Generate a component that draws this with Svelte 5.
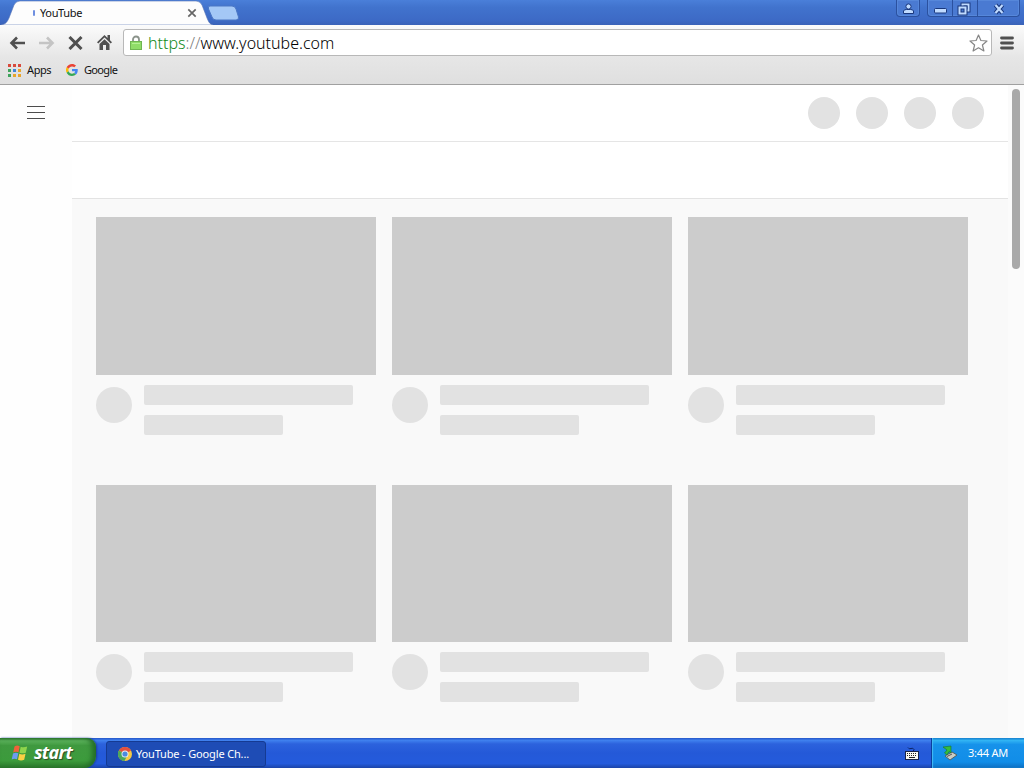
<script>
  const avatars = [1, 2, 3, 4]
  const videos = [1, 2, 3, 4, 5, 6]
  const appColors = [
    '#d84a3c', '#d84a3c', '#d84a3c',
    '#3fa35c', '#4285d8', '#e8a52c',
    '#3fa35c', '#e8a52c', '#e8a52c',
  ]
</script>

<div class="desktop">
  <header class="titlebar">
    <div class="tab">
      <svg class="shape" width="212" height="25" viewBox="0 0 212 25">
        <path d="M0 25 C5 24 6 22 8 18 L13 5 Q15 1 19 1 H195 Q199 1 201 5 L206 18 C208 23 209 24 212 25Z" fill="#fdfdfd" stroke="#5573b5" stroke-width=".6" />
      </svg>
      <i class="spinner"></i>
      <span class="tab-title">YouTube</span>
      <svg class="tab-close" width="10" height="10" viewBox="0 0 10 10">
        <path d="M1.3 1.3 8.7 8.7M8.7 1.3 1.3 8.7" stroke="#666" stroke-width="1.7" />
      </svg>
    </div>
    <svg class="new-tab" width="33" height="16" viewBox="0 0 33 16">
      <path d="M3 1H25Q28 1 29 4L31.500 12Q32 15 29 15H9Q6 15 5 12L1.500 4Q.5 1 3 1Z" fill="#a4c8f6" stroke="#4a76c4" />
    </svg>
    <div class="controls">
      <button class="user" aria-label="Profile">
        <svg width="13" height="13" viewBox="0 0 13 13" fill="#c0dbff" stroke="#19377c">
          <path d="M1.500 11.500V9Q2 7.500 4.500 7.500h4Q11 7.500 11.500 9V11.500z" />
          <circle cx="6.500" cy="4.500" r="2.600" />
        </svg>
      </button>
      <div class="group">
        <button class="min" aria-label="Minimize">
          <svg width="13" height="6" viewBox="0 0 13 6"><rect x=".5" y=".5" width="12" height="4.500" rx="1" fill="#c0dbff" stroke="#19377c" /></svg>
        </button>
        <button class="restore" aria-label="Restore">
          <svg width="14" height="14" viewBox="0 0 14 14" fill="none">
            <path d="M5.500 4V2.500H11.500V8.500H10" stroke="#19377c" stroke-width="4" />
            <path d="M5.500 4V2.500H11.500V8.500H10" stroke="#c0dbff" stroke-width="2" />
            <rect x="2.500" y="5.500" width="6" height="6" stroke="#19377c" stroke-width="4" />
            <rect x="2.500" y="5.500" width="6" height="6" stroke="#c0dbff" stroke-width="2" />
          </svg>
        </button>
        <button class="close" aria-label="Close">
          <svg width="12" height="12" viewBox="0 0 12 12">
            <path d="M2.500 2 9.500 10M9.500 2 2.500 10" stroke="#19377c" stroke-width="4.200" />
            <path d="M2.500 2 9.500 10M9.500 2 2.500 10" stroke="#c0dbff" stroke-width="2.200" />
          </svg>
        </button>
      </div>
    </div>
  </header>

  <div class="chrome">
    <nav class="toolbar">
      <svg width="17" height="14" viewBox="0 0 17 14" fill="none" stroke="#505050" stroke-width="2.600">
        <path d="M16 7H3M8 1.500 2.500 7 8 12.500" />
      </svg>
      <svg width="17" height="14" viewBox="0 0 17 14" fill="none" stroke="#c4c4c4" stroke-width="2.600">
        <path d="M1 7H14M9 1.500 14.500 7 9 12.500" />
      </svg>
      <svg class="stop" width="15" height="14" viewBox="0 0 15 14" stroke="#505050" stroke-width="3">
        <path d="M1.500 1 13.500 13M13.500 1 1.500 13" />
      </svg>
      <svg class="home" width="15" height="15" viewBox="0 0 15 15" fill="#505050">
        <path d="M7.500 0 0 7.300 1.300 8.500 7.500 2.600 13.700 8.500 15 7.300 13 5.300V0H10.500V2.900ZM2.500 9 7.500 4.200 12.500 9V15H9V10H6V15H2.500Z" />
      </svg>
      <div class="address">
        <svg class="lock" width="12" height="16" viewBox="0 0 12 16">
          <path d="M3 7V4.500a3 3 0 0 1 6 0V7" fill="none" stroke="#8b938b" stroke-width="1.800" />
          <rect x=".5" y="6.500" width="11" height="8" fill="#8fdc68" stroke="#6fb552" />
          <path d="M2 8.500h8" stroke="#b5f094" />
        </svg>
        <span class="url"><span class="secure">https</span><span class="slashes">://</span>www.youtube.com</span>
        <svg class="star" width="19" height="18" viewBox="0 0 19 18">
          <path d="M9.500 1 11.900 6.500 18 7 13.400 11 14.900 17 9.500 13.800 4.100 17 5.600 11 1 7 7.100 6.500Z" fill="#fff" stroke="#868686" stroke-width="1.200" stroke-linejoin="round" />
        </svg>
      </div>
      <svg class="menu" width="14" height="14" viewBox="0 0 14 14" stroke="#505050" stroke-width="2.800" stroke-linecap="round">
        <path d="M1.500 2H12.500M1.500 7H12.500M1.500 12H12.500" />
      </svg>
    </nav>
    <div class="bookmarks">
      <div class="apps">
        {#each appColors as color}
          <i style="background: {color}"></i>
        {/each}
      </div>
      <span class="apps-label">Apps</span>
      <svg class="g" width="12" height="12" viewBox="0 0 48 48">
        <path fill="#ea4335" d="M24 9.500c3.500 0 6.700 1.200 9.200 3.600l6.900-6.900C35.900 2.400 30.500 0 24 0 14.600 0 6.500 5.400 2.600 13.200l8 6.200C12.400 13.700 17.700 9.500 24 9.500z" />
        <path fill="#4285f4" d="M47 24.600c0-1.600-.2-3.100-.4-4.600H24v9h12.900c-.6 3-2.300 5.500-4.700 7.200l7.700 6C44.400 38 47 31.800 47 24.600z" />
        <path fill="#fbbc05" d="M10.500 28.600A14.500 14.500 0 0 1 10.500 19.400l-8-6.200a24 24 0 0 0 0 21.600z" />
        <path fill="#34a853" d="M24 48c6.500 0 11.900-2.100 15.900-5.800l-7.700-6c-2.200 1.500-4.900 2.300-8.200 2.300-6.300 0-11.600-4.200-13.500-9.900l-8 6.200C6.500 42.600 14.600 48 24 48z" />
      </svg>
      <span class="google-label">Google</span>
    </div>
  </div>

  <main>
    <aside>
      <button class="guide" aria-label="Guide"><i></i><i></i><i></i></button>
    </aside>
    <div class="page">
      <div class="masthead">
        {#each avatars as avatar (avatar)}
          <i></i>
        {/each}
      </div>
      <div class="chips"></div>
      <div class="grid">
        {#each videos as video (video)}
          <article>
            <div class="thumb"></div>
            <div class="details">
              <i class="channel"></i>
              <div class="lines">
                <i class="line"></i>
                <i class="line short"></i>
              </div>
            </div>
          </article>
        {/each}
      </div>
    </div>
    <div class="scrollbar"><i></i></div>
  </main>

  <footer class="taskbar">
    <button class="start">
      <svg width="18" height="18" viewBox="0 0 18 18">
        <path d="M3.500 2.500Q6 .7 8.700 2.200L7.500 8.200Q5 7 2.200 8.400Z" fill="#f0623a" />
        <path d="M9.700 2.700Q12.500 4 16.200 2.500L14.800 8.700Q11.500 10 8.500 8.700Z" fill="#8fd44c" />
        <path d="M2 9.500Q4.800 8 7.300 9.300L6 15.300Q3.500 14 .7 15.500Z" fill="#6c9cf0" />
        <path d="M8.300 9.800Q11.300 11 14.500 9.800L13.200 15.800Q10 17.200 7 15.800Z" fill="#fbd044" />
      </svg>
      <span>start</span>
    </button>
    <div class="task">
      <svg width="14" height="14" viewBox="0 0 14 14">
        <circle cx="7" cy="7" r="7" fill="#f6c945" />
        <path d="M7 7 .9 3.500A7 7 0 0 1 13.100 3.500Z" fill="#e2503f" />
        <path d="M7 7 .9 3.500A7 7 0 0 0 6.500 14L9 9Z" fill="#4ba85c" />
        <circle cx="7" cy="7" r="3.500" fill="#e9eef5" />
        <circle cx="7" cy="7" r="2.600" fill="#4b8ae0" />
      </svg>
      <span>YouTube - Google Ch...</span>
    </div>
    <svg class="keyboard" width="14" height="13" viewBox="0 0 14 13">
      <path d="M3 .5Q4 2.500 6 1.500T9 2.500L8 5" fill="none" stroke="#0c2466" />
      <rect x=".5" y="4.500" width="13" height="8" fill="#f8f8f0" stroke="#182448" />
      <path d="M2 6.500H12M2 8.500H12" stroke="#222" stroke-dasharray="1 1" />
      <path d="M4 10.500H10" stroke="#222" />
    </svg>
    <div class="tray">
      <svg width="16" height="16" viewBox="0 0 16 16">
        <path d="M3 11 10 7 15 10 8 15Z" fill="#c9ccc4" stroke="#4c534c" stroke-width=".8" />
        <path d="M5 11.500 10 9" stroke="#555" />
        <path d="M1 2 9 1V8L7 6.500 5 10 2.500 8 5 5Z" fill="#35bd3c" stroke="#17742b" stroke-width=".6" />
      </svg>
      <span>3:44 AM</span>
    </div>
  </footer>
</div>

<style>
  :global(body) {
    margin: 0;
    overflow: hidden;
  }
  .desktop {
    width: 1024px;
    height: 768px;
    display: flex;
    flex-direction: column;
    font-family: 'Noto Sans', 'Open Sans', sans-serif;
    font-size: 11px;
    line-height: 14px;
    color: #111;
    background: #fff;
  }
  .desktop * {
    box-sizing: border-box;
  }
  svg {
    display: block;
    flex: none;
  }
  i {
    display: block;
  }
  button {
    margin: 0;
    padding: 0;
    border: 0;
    background: none;
    font: inherit;
  }
  span {
    white-space: nowrap;
  }
  .titlebar {
    height: 25px;
    flex: none;
    display: flex;
    align-items: flex-start;
    background: linear-gradient(#4a7fd9, #4173cd 30%, #3d6ac6 80%, #3a63b8);
  }
  .tab {
    position: relative;
    width: 205px;
    height: 25px;
    display: flex;
    align-items: center;
    padding: 1px 8px 0 33px;
  }
  .shape {
    position: absolute;
    left: 1px;
    top: 0;
  }
  .spinner {
    position: relative;
    width: 2px;
    height: 6px;
    border-radius: 1px;
    background: #6f8fe0;
  }
  .tab-title {
    position: relative;
    margin-left: 5px;
    letter-spacing: -0.35px;
  }
  .tab-close {
    position: relative;
    margin-left: auto;
  }
  .new-tab {
    margin: 5px 0 0 2px;
  }
  .controls {
    display: flex;
    gap: 7px;
    margin-left: auto;
    padding-right: 4px;
  }
  .controls button {
    height: 17px;
    display: flex;
    align-items: center;
    justify-content: center;
  }
  .user,
  .group {
    border: 1px solid #2b519f;
    border-top: 0;
    border-radius: 0 0 4px 4px;
    background: #4a7ad2;
    box-shadow: inset 0 0 0 1px #5687da;
  }
  .controls .user {
    width: 24px;
    border: 1px solid #2b519f;
    border-top: 0;
  }
  .group {
    display: flex;
    height: 17px;
  }
  .group .min {
    width: 24px;
    padding-top: 4px;
  }
  .group .restore {
    width: 26px;
    padding-right: 2px;
    border-left: 1px solid #2b519f;
    border-right: 1px solid #2b519f;
  }
  .group .close {
    width: 41px;
  }
  .chrome {
    height: 60px;
    flex: none;
    border-bottom: 1px solid #a0a0a0;
    background: linear-gradient(#fbfbfb, #e6e6e6 55%, #dfdfdf);
  }
  .toolbar {
    height: 35px;
    display: flex;
    align-items: center;
    padding: 0 10px 0 9px;
  }
  .toolbar > svg + svg {
    margin-left: 12px;
  }
  .toolbar > .stop + .home {
    margin-left: 14px;
  }
  .toolbar > svg + .stop {
    margin-left: 13px;
  }
  .address {
    flex: 1;
    height: 27px;
    margin: 0 8px 0 11px;
    padding: 0 3px 0 6px;
    display: flex;
    align-items: center;
    border: 1px solid #b8b8b8;
    border-radius: 3px;
    background: #fff;
  }
  .url {
    margin: 1px 0 0 6px;
    font-size: 16px;
    line-height: 20px;
    font-weight: 300;
    color: #000;
  }
  .secure {
    color: #128a1a;
  }
  .slashes {
    color: #808080;
  }
  .star {
    margin-left: auto;
  }
  .bookmarks {
    height: 20px;
    display: flex;
    align-items: center;
    padding-left: 8px;
  }
  .apps {
    display: grid;
    grid-template-columns: repeat(3, 3px);
    grid-auto-rows: 3px;
    gap: 2px;
  }
  .apps-label {
    width: 24px;
    margin-left: 6px;
    letter-spacing: -0.4px;
  }
  .g {
    margin-left: 15px;
  }
  .google-label {
    margin-left: 6px;
    letter-spacing: -0.65px;
  }
  main {
    height: 653px;
    flex: none;
    display: flex;
    overflow: hidden;
    background: #fff;
  }
  aside {
    width: 72px;
    flex: none;
    padding: 21px 0 0 27px;
    background: #fefefe;
  }
  .guide {
    display: flex;
    flex-direction: column;
    gap: 5px;
  }
  .guide i {
    width: 18px;
    height: 1px;
    background: #4c4c4c;
  }
  .page {
    width: 936px;
    flex: none;
  }
  .masthead {
    height: 57px;
    display: flex;
    justify-content: flex-end;
    gap: 16px;
    padding: 12px 24px 0 0;
    border-bottom: 1px solid #e5e5e5;
  }
  .masthead i {
    width: 32px;
    height: 32px;
    border-radius: 50%;
    background: #e2e2e2;
  }
  .chips {
    height: 57px;
    border-bottom: 1px solid #e3e3e3;
  }
  .grid {
    display: grid;
    grid-template-columns: repeat(3, 280px);
    grid-auto-rows: 267.5px;
    column-gap: 16px;
    padding: 18px 0 0 24px;
    background: #f9f9f9;
  }
  .thumb {
    height: 157.5px;
    background: #ccc;
  }
  .details {
    display: flex;
    gap: 12px;
    margin-top: 10px;
  }
  .channel {
    width: 36px;
    height: 36px;
    margin-top: 2px;
    border-radius: 50%;
    background: #e2e2e2;
  }
  .lines {
    display: flex;
    flex-direction: column;
    gap: 10px;
  }
  .line {
    width: 209px;
    height: 20px;
    border-radius: 2px;
    background: #e2e2e2;
  }
  .short {
    width: 139px;
  }
  .scrollbar {
    flex: 1;
    padding: 4px 4px 0;
    background: #fbfbfb;
  }
  .scrollbar i {
    height: 180px;
    border-radius: 4px;
    background: #a9a9a9;
  }
  .taskbar {
    height: 30px;
    flex: none;
    display: flex;
    align-items: center;
    color: #fff;
    background: linear-gradient(#2456c8, #3f80ee 8%, #2c62dd 20%, #2459d8 50%, #245bdc 85%, #1b44a8);
  }
  .start {
    width: 96px;
    height: 30px;
    display: flex;
    align-items: center;
    padding-left: 11px;
    border-radius: 0 9px 12px 0;
    color: #fff;
    background: linear-gradient(#2f7a30, #5cb35c 9%, #3f993f 25%, #3c9b3c 75%, #2c7a2c);
    box-shadow: inset -4px 0 5px #246d28, 1px 0 2px #1a3f9e;
  }
  .start span {
    margin: 0 0 2px 5px;
    font-size: 18px;
    line-height: 22px;
    font-weight: 700;
    font-style: italic;
    letter-spacing: -0.7px;
    text-shadow: 1px 1px 1px #2b4a24;
  }
  .task {
    width: 160px;
    height: 26px;
    margin: 2px 0 0 10px;
    display: flex;
    align-items: center;
    gap: 4px;
    padding-left: 11px;
    border: 1px solid #153a92;
    border-radius: 3px;
    background: #1e4cb5;
  }
  .task span {
    letter-spacing: -0.15px;
  }
  .keyboard {
    margin: 0 12px 0 auto;
  }
  .tray {
    width: 93px;
    height: 30px;
    display: flex;
    align-items: center;
    gap: 10px;
    padding-left: 10px;
    border-left: 1px solid #0b3f9e;
    background: linear-gradient(#1277c8, #31b4f4 8%, #1692ea 22%, #118de8 80%, #0e6ec0);
    box-shadow: inset 1px 0 1px #44bdf6;
  }
  .tray span {
    letter-spacing: -0.25px;
  }
</style>
